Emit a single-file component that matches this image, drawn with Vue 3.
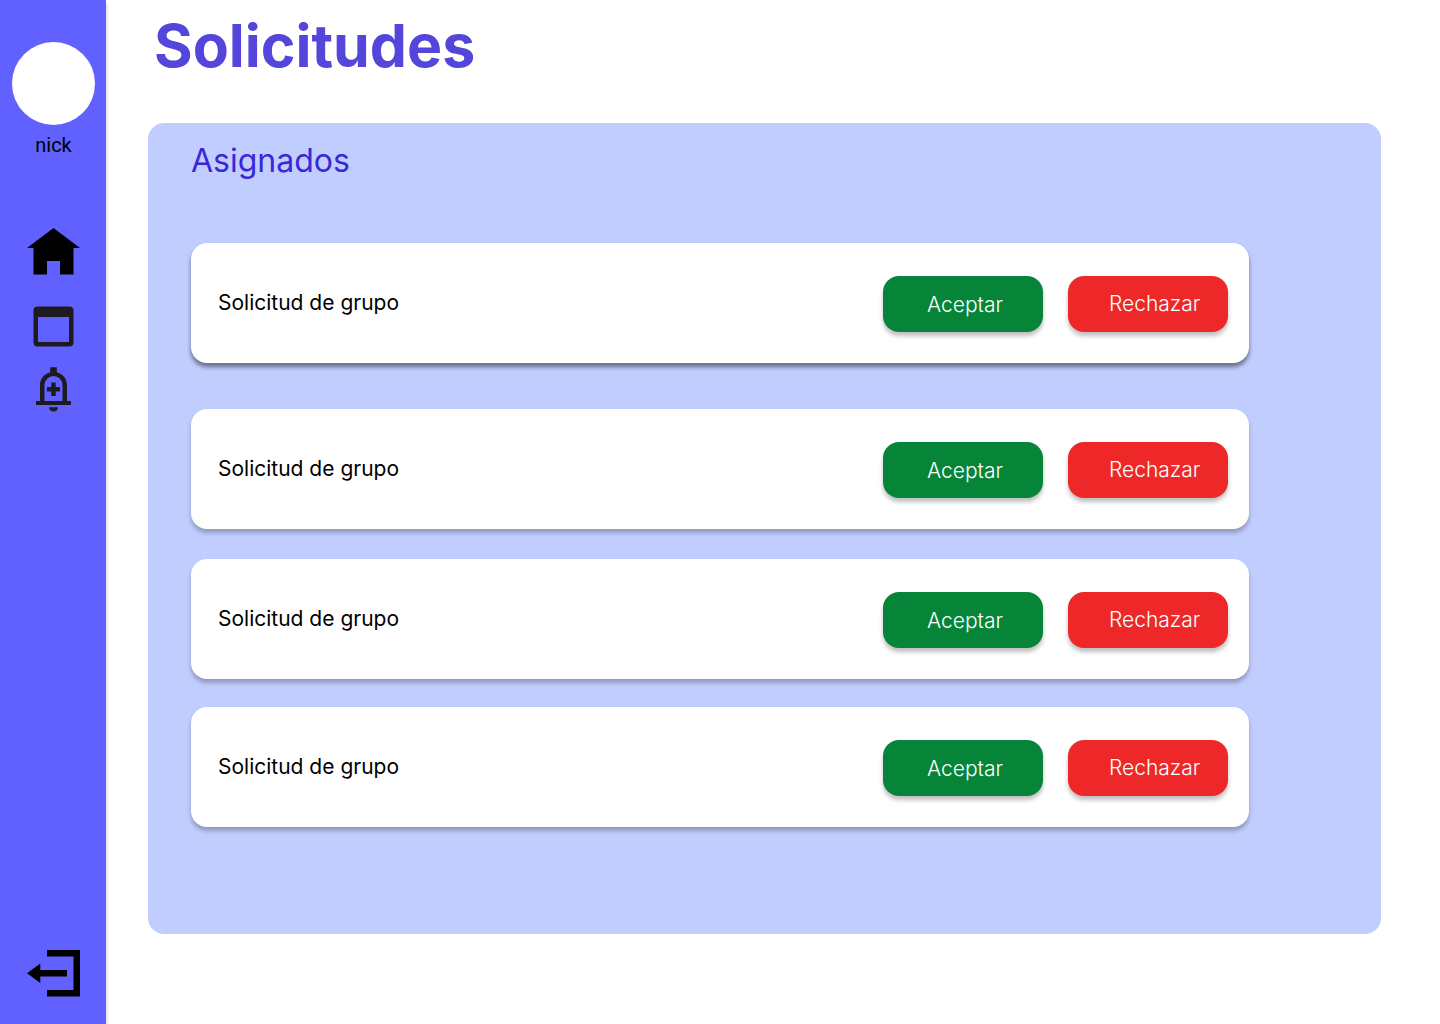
<script setup>
import { ref } from 'vue'

const requests = ref([
  { id: 1, title: 'Solicitud de grupo' },
  { id: 2, title: 'Solicitud de grupo' },
  { id: 3, title: 'Solicitud de grupo' },
  { id: 4, title: 'Solicitud de grupo' },
])
</script>

<template>
  <div class="app">
    <aside class="sidebar">
      <div class="avatar"></div>
      <span class="nick">nick</span>
      <nav class="nav">
        <a href="#" class="nav-link home" aria-label="Inicio">
          <svg width="53" height="46" viewBox="0 0 53 46">
            <path d="M26.500 0L53 20H46.500V46.500H33V33H20V46.500H6.500V20H0Z" />
          </svg>
        </a>
        <a href="#" class="nav-link calendar" aria-label="Calendario">
          <svg width="41" height="41" viewBox="0 0 41 41">
            <path fill="#1d1b20" fill-rule="evenodd" d="M4.500.5H36.500A4 4 0 0 1 40.500 4.500V36.500A4 4 0 0 1 36.500 40.500H4.500A4 4 0 0 1 .5 36.500V4.500A4 4 0 0 1 4.500.5ZM5 11V36H36V11Z" />
          </svg>
        </a>
        <a href="#" class="nav-link" aria-label="Solicitudes">
          <svg width="35" height="45" viewBox="0 0 35 45">
            <g fill="#1d1b20">
              <path fill-rule="evenodd" d="M0 34H4V18C4 11.500 8.500 6.500 14.200 5.200V0.300H20.800V5.200C26.500 6.500 31 11.500 31 18V34H35V38H0ZM8.500 34H26.500V18A9 9 0 0 0 8.500 18Z" />
              <path d="M15.300 15.500H19.700V20H24V24.500H19.700V29H15.300V24.500H11V20H15.300Z" />
              <path d="M13 40.200H22A4.500 4.300 0 0 1 13 40.200Z" />
            </g>
          </svg>
        </a>
      </nav>
      <a href="#" class="logout" aria-label="Salir">
        <svg width="53" height="47" viewBox="0 0 53 47">
          <path d="M20 0H53V46.500H20V40H46.500V6.500H20Z" />
          <path d="M0 23.200L13.300 13.500V20H40V26.500H13.300V33Z" />
        </svg>
      </a>
    </aside>

    <main class="main">
      <h1 class="title">Solicitudes</h1>
      <section class="panel">
        <h2 class="subtitle">Asignados</h2>
        <ul class="list">
          <li v-for="request in requests" :key="request.id" class="card">
            <span class="card-title">{{ request.title }}</span>
            <button type="button" class="btn accept">Aceptar</button>
            <button type="button" class="btn reject">Rechazar</button>
          </li>
        </ul>
      </section>
    </main>
  </div>
</template>

<style>
body {
  margin: 0;
  background: #fff;
}
</style>

<style scoped>
.app {
  display: flex;
  min-height: 100vh;
  font-family: Inter, sans-serif;
}

.sidebar {
  display: flex;
  flex: none;
  flex-direction: column;
  align-items: center;
  box-sizing: border-box;
  width: 106px;
  padding: 42px 0 27px 1px;
  background: #6161ff;
  box-shadow: 0 4px 4px rgba(0, 0, 0, 0.25);
}

.avatar {
  width: 83px;
  height: 83px;
  border-radius: 50%;
  background: #fff;
}

.nick {
  margin-top: 8px;
  font-family: Roboto, sans-serif;
  font-size: 20px;
  line-height: 24px;
}

.nav {
  display: flex;
  flex-direction: column;
  align-items: center;
  margin-top: 71px;
}

.nav-link,
.logout {
  display: block;
  color: #000;
}

.nav-link svg,
.logout svg {
  display: block;
  overflow: visible;
  fill: currentColor;
}

.home {
  margin-bottom: 32px;
}

.calendar {
  margin-bottom: 20px;
}

.logout {
  margin-top: auto;
}

.main {
  flex: 1;
  min-width: 0;
  padding: 12px 59px 90px 42px;
}

.title {
  margin: 0 0 43px 6px;
  color: #5445db;
  font-size: 59px;
  font-weight: 700;
  line-height: 68px;
}

.panel {
  padding: 20px 132px 107px 43px;
  border-radius: 16px;
  background: #c2cdff;
}

.subtitle {
  margin: 0 0 64px;
  color: #3a28d6;
  font-size: 32px;
  font-weight: 400;
  line-height: 36px;
}

.list {
  margin: 0;
  padding: 0;
  list-style: none;
}

.card {
  display: flex;
  align-items: center;
  box-sizing: border-box;
  height: 120px;
  margin-bottom: 30px;
  padding: 2px 21px 0 27px;
  border-radius: 16px;
  background: #fff;
  box-shadow: 0 4px 4px rgba(0, 0, 0, 0.25);
}

.card:first-child {
  margin-bottom: 46px;
  box-shadow: 0 4px 4px rgba(0, 0, 0, 0.25), 0 4px 4px rgba(0, 0, 0, 0.25);
}

.card:nth-child(3) {
  margin-bottom: 28px;
}

.card:last-child {
  margin-bottom: 0;
}

.card-title {
  flex: 1;
  padding-bottom: 2px;
  font-size: 21px;
  line-height: 24px;
}

.btn {
  width: 160px;
  height: 56px;
  padding: 0 0 0 44px;
  border: 0;
  border-radius: 16px;
  color: #fff;
  font-family: inherit;
  font-size: 21px;
  font-weight: 300;
  line-height: 24px;
  text-align: left;
  box-shadow: 0 4px 4px rgba(0, 0, 0, 0.25);
  cursor: pointer;
}

.accept {
  padding-top: 2px;
  background: #068438;
}

.reject {
  margin-left: 25px;
  padding-left: 41px;
  background: #ee2828;
}
</style>
